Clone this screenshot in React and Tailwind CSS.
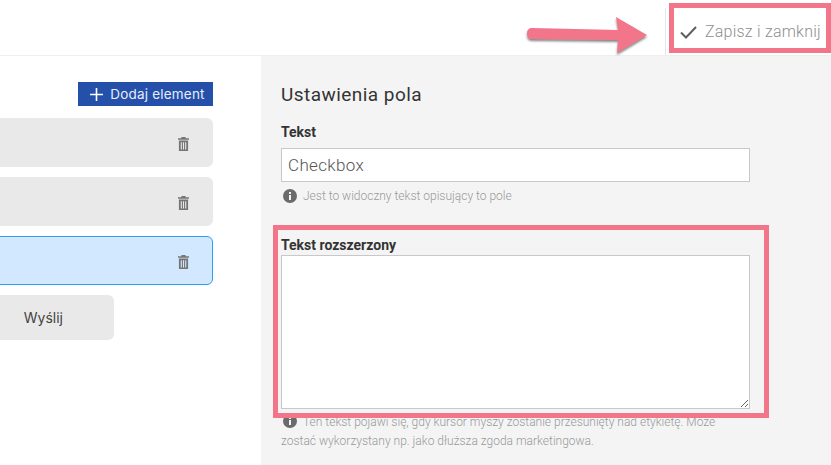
const Trash = () => (
  <svg width="11" height="14" viewBox="0 0 12 14" preserveAspectRatio="none" className="text-[#757575]" fill="currentColor">
    <path d="M4 0h4l.6 1.2H12v1.6H0V1.2h3.4z" />
    <path fillRule="evenodd" d="M1 3.6h10V14H1zM3 5.2v7.2h1.2V5.2zM5.4 5.2v7.2h1.2V5.2zM7.8 5.2v7.2H9V5.2z" />
  </svg>
);

const Info = () => (
  <svg width="14" height="14" viewBox="0 0 14 14" className="shrink-0">
    <circle cx="7" cy="7" r="7" fill="#6b6b6b" />
    <rect x="6" y="6" width="2" height="5" fill="#f4f4f4" />
    <rect x="6" y="3" width="2" height="2" fill="#f4f4f4" />
  </svg>
);

const Row = ({ active }) => (
  <div className={"h-[49px] -ml-4 rounded-md flex items-center justify-end pr-[23px] pt-[2px] border " + (active ? "bg-[#d1e8ff] border-[#2f9ff0]" : "bg-[#e9e9e9] border-[#e9e9e9]")}>
    <Trash />
  </div>
);

export default function App() {
  return (
    <div className="relative w-[831px] h-[465px] overflow-hidden bg-white text-[#333]" style={{ fontFamily: "Roboto, sans-serif" }}>
      <header className="h-[56px] border-b border-[#eeeeee] flex justify-end bg-white">
        <div className="w-[166px] border-l border-[#e6e6e6] mt-2 flex items-center pl-[14px] gap-[8px] py-[8px] text-[#8e8e8e] text-[16px] tracking-[0.22px] font-light">
          <svg width="17" height="14" viewBox="0 0 17 14" fill="none" stroke="#5f5f5f" strokeWidth="2">
            <path d="M1 7.5l5 5L16 2" />
          </svg>
          <span className="whitespace-nowrap">Zapisz i zamknij</span>
        </div>
      </header>

      <div className="flex h-[409px]">
        <section className="w-[261px] pt-[26px] pr-[48px]">
          <div className="flex justify-end">
            <button className="w-[135px] h-6 bg-[#2550aa] text-[#e8eefb] text-[13.5px] flex items-center justify-center gap-[7px] tracking-[0.2px] pl-[4px]" style={{ fontFamily: "Inter, sans-serif" }}>
              <svg width="13" height="13" viewBox="0 0 13 13" stroke="#fff" strokeWidth="1.6">
                <path d="M6.5 0v13M0 6.5h13" />
              </svg>
              Dodaj element
            </button>
          </div>
          <div className="mt-3 flex flex-col gap-[10px]">
            <Row />
            <Row />
            <Row active />
            <div className="w-[130px] h-[45px] -ml-4 rounded-md bg-[#e9e9e9] flex items-center justify-end pr-[51px] text-[14px] text-[#444]" style={{ fontFamily: "Inter, sans-serif" }}>
              Wyślij
            </div>
          </div>
        </section>

        <section className="flex-1 bg-[#f4f4f4] pl-5 pr-[81px] pt-[27px]">
          <h2 className="text-[19px] leading-[24px] tracking-[0.45px] text-[#333]">Ustawienia pola</h2>
          <label className="block mt-[16px] text-[14px] leading-[18px] font-bold text-[#333]">Tekst</label>
          <div className="mt-[7px] h-[34px] bg-white border border-[#c8c8c8] flex items-center px-[6px] pt-[2px] text-[17px] text-[#555] tracking-[0.35px] font-light">Checkbox</div>
          <div className="mt-[7px] flex items-center gap-[6px] pl-[2px] text-[12px] leading-[14px] text-[#999] font-light tracking-[0px]">
            <Info />
            Jest to widoczny tekst opisujący to pole
          </div>
          <label className="block mt-[33px] text-[14px] leading-[18px] font-bold text-[#333]">Tekst rozszerzony</label>
          <textarea className="block mt-[1px] w-full h-[154px] bg-white border border-[#c8c8c8] outline-none" readOnly />
          <div className="mt-[4px] text-[12px] leading-[19px] text-[#999] font-light tracking-[0px]">
            <span className="inline-block align-[-2px] ml-[2px] mr-[6px]"><Info /></span>
            Ten tekst pojawi się, gdy kursor myszy zostanie przesunięty nad etykietę. Może zostać wykorzystany np. jako dłuższa zgoda marketingowa.
          </div>
        </section>
      </div>

      <div className="absolute left-[669px] top-[3px] w-[162px] h-[50px] border-[5px] border-[#f2758a]" />
      <div className="absolute left-[273px] top-[225px] w-[496px] h-[193px] border-[5px] border-[#f2758a]" />
      <svg className="absolute left-[524px] top-[14px]" width="128" height="46" viewBox="0 0 128 46">
        <defs>
          <filter id="sh" x="-10%" y="-20%" width="120%" height="150%">
            <feDropShadow dx="0" dy="2" stdDeviation="1" floodColor="#333" floodOpacity="0.6" />
          </filter>
        </defs>
        <path filter="url(#sh)" d="M8 14 L94 16 L92 3 L123 21 L93 39 L94 26 L8 25 Q3 25 3 19.5 Q3 14 8 14Z" fill="#f2758a" />
      </svg>
    </div>
  );
}
